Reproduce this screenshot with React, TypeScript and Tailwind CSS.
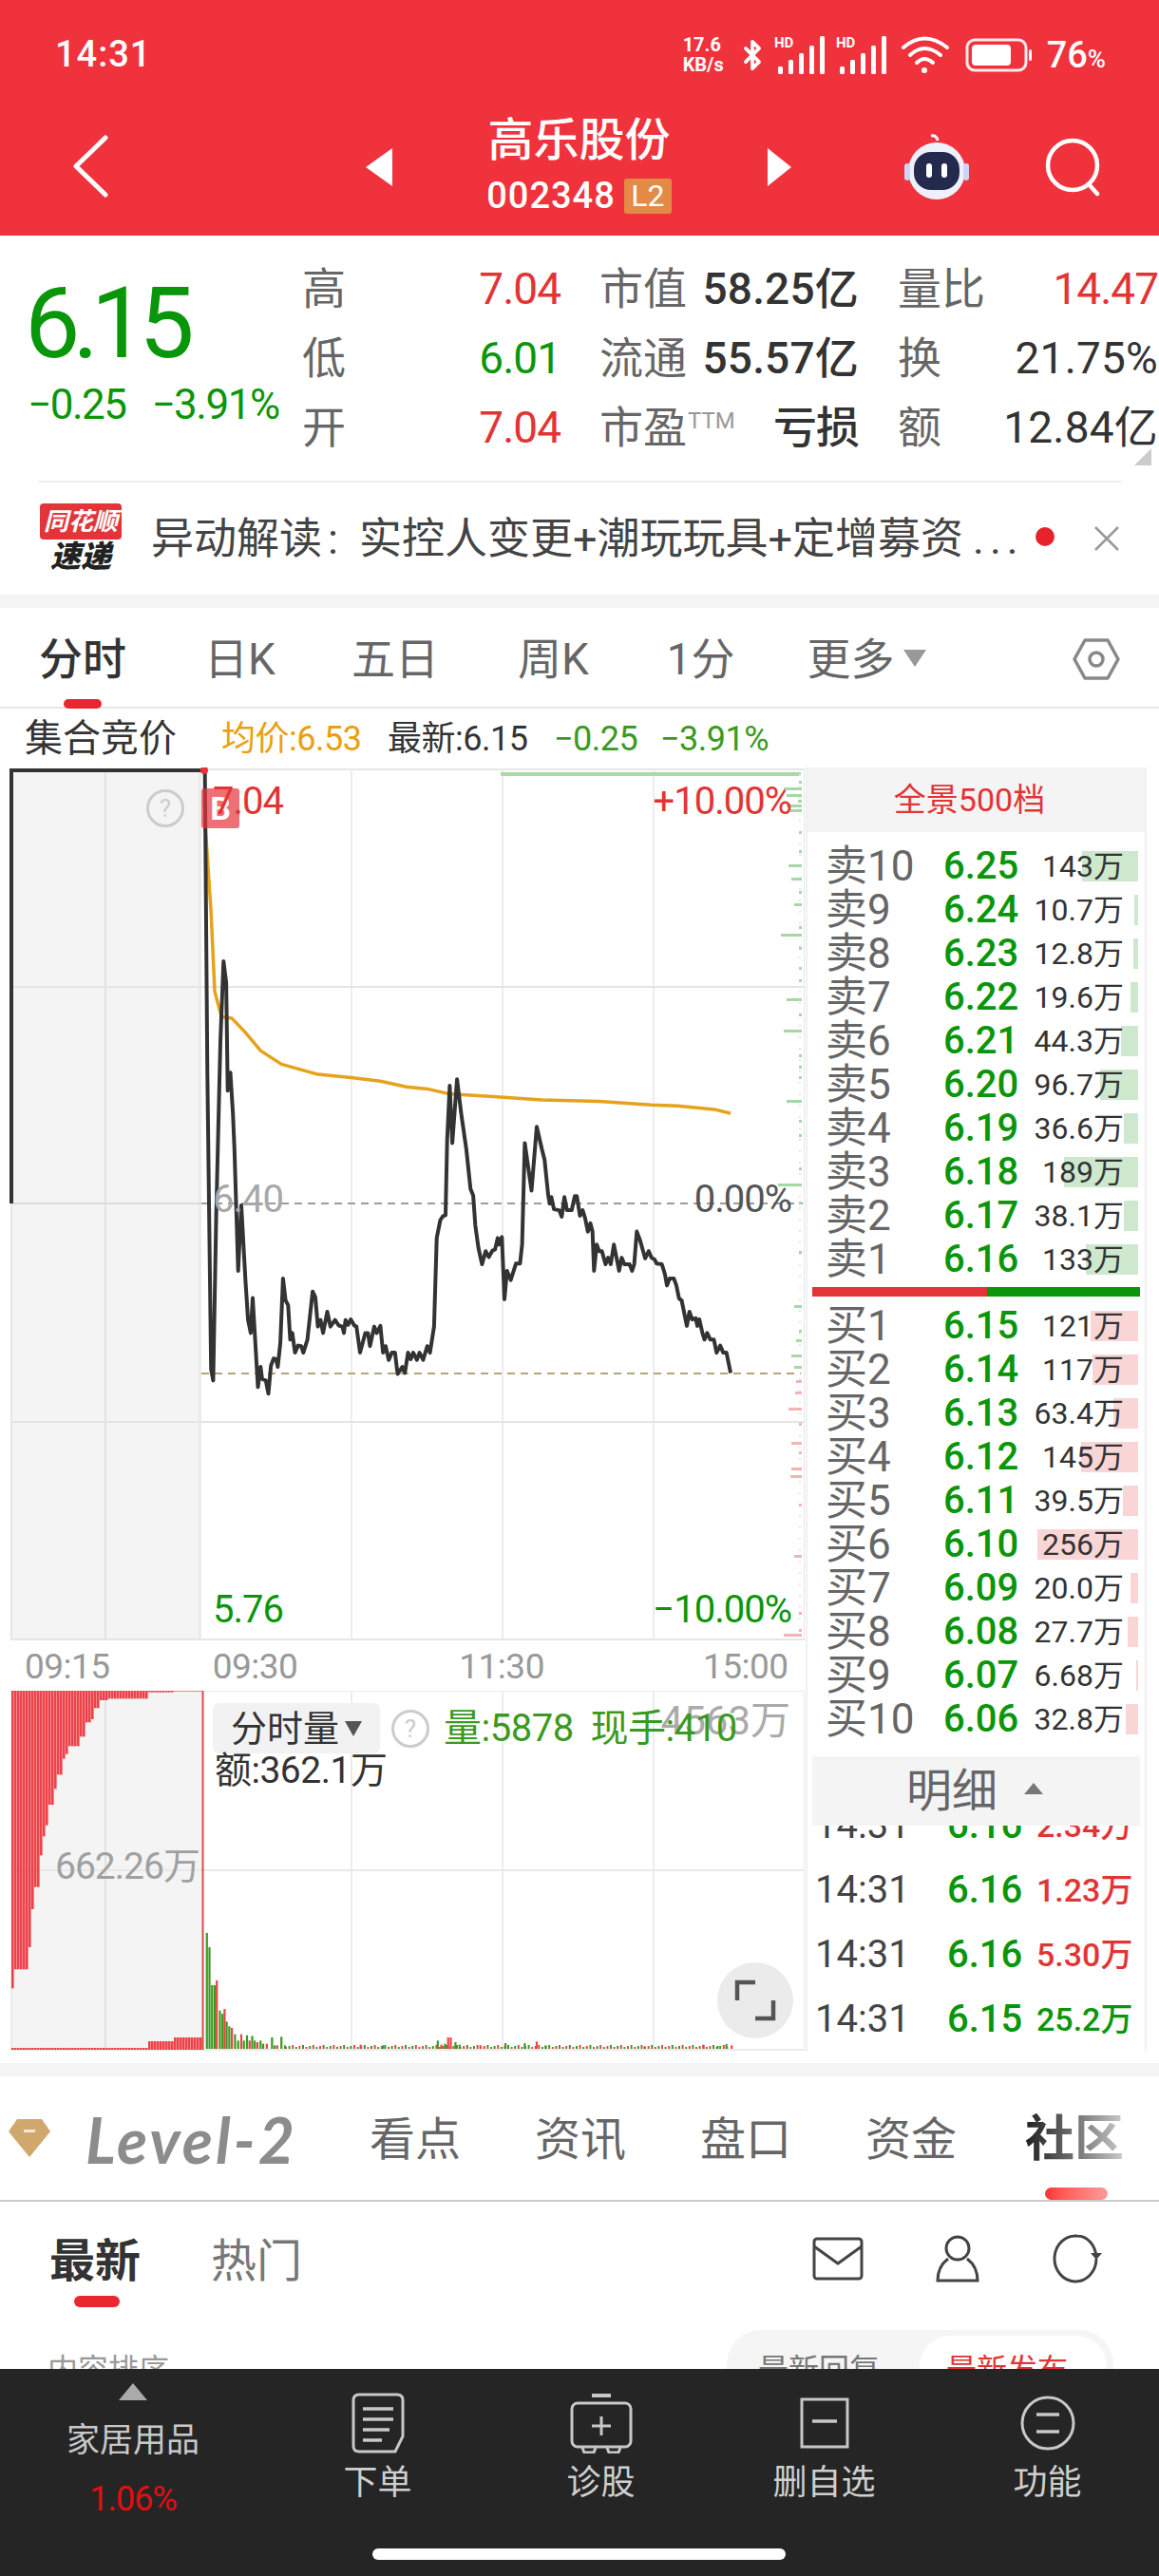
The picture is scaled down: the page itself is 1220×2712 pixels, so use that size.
import { Bluetooth } from "lucide-react";

// price line, read off the chart in crop coordinates
const priceRaw = [
  [392,-1360],[398,-200],[405,700],[409,735],[415,230],[423,-300],[429,-545],[434,-480],[437,-150],[442,-205],[447,-80],[450,30],[457,400],[463,200],[471,430],[476,550],[481,590],[485,483],[495,755],[500,693],[503,730],[510,735],[515,775],[520,690],[525,668],[530,670],[533,693],[538,620],[543,423],[548,490],[553,505],[557,610],[561,590],[566,650],[572,628],[578,630],[582,650],[590,610],[600,463],[605,480],[610,570],[615,550],[620,590],[628,525],[634,570],[643,550],[650,567],[657,570],[660,590],[663,550],[668,565],[673,548],[680,567],[684,570],[691,650],[701,590],[706,590],[710,630],[718,570],[723,590],[730,568],[735,650],[740,630],[746,672],[752,650],[758,650],[763,715],[772,693],[777,712],[783,650],[788,670],[793,650],[800,672],[805,650],[812,672],[820,630],[825,650],[833,570],[838,300],[845,245],[850,233],[855,230],[858,0],[863,-165],[868,10],[877,-185],[885,-80],[895,30],[903,150],[908,170],[912,260],[918,330],[925,380],[932,340],[938,358],[945,338],[950,335],[955,300],[958,320],[963,297],[968,487],[973,400],[980,428],[990,378],[998,378],[1002,320],[1007,10],[1020,155],[1030,-40],[1040,30],[1045,60],[1052,170],[1055,195],[1058,175],[1063,212],[1073,215],[1078,235],[1083,175],[1088,215],[1097,215],[1103,172],[1107,172],[1113,232],[1118,215],[1123,240],[1128,280],[1133,255],[1137,280],[1140,400],[1145,320],[1150,340],[1155,340],[1162,380],[1167,360],[1172,380],[1178,320],[1188,400],[1193,360],[1198,380],[1208,380],[1213,400],[1217,380],[1222,280],[1228,305],[1238,362],[1245,340],[1250,360],[1256,365],[1260,378],[1270,380],[1276,410],[1280,445],[1285,423],[1293,423],[1298,445],[1303,485],[1308,490],[1318,568],[1323,525],[1328,548],[1335,545],[1338,568],[1342,548],[1348,590],[1352,610],[1357,590],[1363,610],[1370,610],[1375,650],[1382,628],[1388,650],[1394,650],[1402,712],
];
const pricePts = priceRaw.map(([x, y]) => `${(x / 1.823).toFixed(1)},${(1200 + y / 2.9).toFixed(1)}`).join(" ");

const avgRaw = [
  [393,620],[405,900],[412,1130],[425,1205],[445,1210],[470,1250],[500,1305],[540,1345],[610,1375],[674,1385],[730,1395],[780,1412],[820,1418],[860,1432],[940,1440],[1040,1450],[1150,1455],[1250,1465],[1300,1468],[1370,1478],[1402,1490],
];
const avgPts = avgRaw.map(([x, y]) => `${(x / 1.823).toFixed(1)},${(640 + y / 2.8).toFixed(1)}`).join(" ");

// right edge ticks of the main chart: [y, width, up]
const ticks: [number, number, boolean][] = [
  [822,3,true],[829,19,true],[836,16,true],[842,4,true],[847,16,true],[852,12,true],[875,3,true],[895,3,true],[910,14,true],[924,11,true],[938,3,true],[951,8,true],[975,3,true],[983,22,true],[997,3,true],[1018,3,true],[1031,3,true],[1051,16,true],[1067,3,true],[1084,19,true],[1110,3,true],[1122,3,true],[1133,3,true],[1158,16,true],[1179,3,true],[1194,3,true],
  [1229,3,true],[1246,25,true],[1265,3,true],[1317,3,true],[1374,8,true],[1400,3,true],[1410,6,true],[1426,11,true],[1438,8,true],
  [1453,6,false],[1465,7,false],[1482,14,false],[1498,3,false],[1518,11,false],[1528,3,false],[1545,11,false],[1553,12,false],[1583,3,false],[1637,8,false],[1697,3,false],[1715,3,false],[1720,19,false],
];

// auction bars in the volume chart, [crop x, crop y of the lower end]
const curve = [[22,1060],[50,1000],[55,930],[60,865],[65,810],[72,740],[78,640],[85,580],[92,545],[100,480],[108,430],[115,385],[125,335],[130,320],[150,295],[160,265],[170,220],[180,210],[190,175],[203,150],[280,145],[283,130],[330,125],[385,122]];
const auctionBars = Array.from({ length: 67 }, (_, i) => {
  const x = 12 + i * 3;
  const cx = x * 1.823;
  const c = curve.find((p) => p[0] >= cx) ?? curve[curve.length - 1];
  const lower = 1740 + c[1] / 3;
  const up = cx < 280 ? 2156 : cx < 330 ? 2149 : 2145;
  return { x, lower, up };
});

// volume bars, [crop x, crop y of the top]
const volRaw = [[395,885],[400,930],[405,1050],[410,1050],[414,1035],[420,1130],[425,1140],[429,1125],[433,1165],[438,1180],[443,1185],[449,1205],[455,1225],[461,1205],[466,1225],[472,1208],[477,1225],[482,1210],[487,1225],[492,1230],[498,1225],[503,1235],[510,1235],[520,1215],[525,1240],[530,1240],[538,1213],[545,1240],[690,1238],[733,1240],[838,1225],[845,1238],[852,1235],[858,1215],[863,1215],[872,1230],[880,1238],[920,1240],[968,1233],[1005,1233],[1028,1228],[1045,1240],[1235,1243],[1348,1238],[1375,1242],[1392,1236],[1402,1240]];
const volBars = volRaw.map(([x, y], i) => ({ x: x / 1.823, y: 1740 + y / 3, red: x > 410 ? i % 3 === 1 || x === 858 || x === 1028 : false }));
const lowBars = Array.from({ length: 130 }, (_, i) => ({ x: 300 + i * 3.6, h: 2 + (i * 7) % 3, red: i % 2 === 0 }));

const sells = [
  ["卖10", "6.25", "143万", 59],
  ["卖9", "6.24", "10.7万", 4],
  ["卖8", "6.23", "12.8万", 5],
  ["卖7", "6.22", "19.6万", 8],
  ["卖6", "6.21", "44.3万", 18],
  ["卖5", "6.20", "96.7万", 40],
  ["卖4", "6.19", "36.6万", 15],
  ["卖3", "6.18", "189万", 78],
  ["卖2", "6.17", "38.1万", 15],
  ["卖1", "6.16", "133万", 55],
] as const;

const buys = [
  ["买1", "6.15", "121万", 50],
  ["买2", "6.14", "117万", 48],
  ["买3", "6.13", "63.4万", 26],
  ["买4", "6.12", "145万", 60],
  ["买5", "6.11", "39.5万", 16],
  ["买6", "6.10", "256万", 106],
  ["买7", "6.09", "20.0万", 8],
  ["买8", "6.08", "27.7万", 11],
  ["买9", "6.07", "6.68万", 2],
  ["买10", "6.06", "32.8万", 13],
] as const;

const trades = [
  ["6.16", "2.34万", "text-[#e23434]"],
  ["6.16", "1.23万", "text-[#e23434]"],
  ["6.16", "5.30万", "text-[#e23434]"],
  ["6.15", "25.2万", "text-[#0a960a]"],
];

const Signal = () => (
  <svg width="56" height="44" viewBox="0 0 56 44" fill="white">
    <text x="0" y="14" fontSize="15" fontWeight="700" fontFamily="Roboto">HD</text>
    <rect x="4" y="34" width="5" height="8" rx="1.5" />
    <rect x="15" y="27" width="5" height="15" rx="1.5" />
    <rect x="26" y="20" width="5" height="22" rx="1.5" />
    <rect x="37" y="12" width="5" height="30" rx="1.5" />
    <rect x="48" y="2" width="5" height="40" rx="1.5" />
  </svg>
);

function OrderRow({ row, barColor }: { row: readonly [string, string, string, number]; barColor: string }) {
  return (
    <div className="relative flex h-[46px] items-center">
      <div className="absolute right-[7px] h-[32px]" style={{ width: row[3], background: barColor }} />
      <span className="relative ml-[19px] w-[124px] text-[44px] leading-none text-[#666]">{row[0]}</span>
      <span className="relative w-[85px] text-[40px] leading-none font-medium text-[#0a960a]">{row[1]}</span>
      <span className="relative flex-1 pr-[22px] text-right text-[32px] leading-none whitespace-nowrap text-[#333]">{row[2]}</span>
    </div>
  );
}

function QuoteCell({ label, value, color, sup, wide }: { label: string; value: string; color: string; sup?: string; wide?: boolean }) {
  return (
    <div className="flex items-center justify-between">
      <span className="flex items-start text-[46px] leading-none whitespace-nowrap text-[#666]">
        {label}
        {sup && <span className="mt-[4px] ml-[1px] text-[24px] leading-none text-[#999]">{sup}</span>}
      </span>
      <span className={`text-[46px] leading-none whitespace-nowrap ${color} ${wide ? "tracking-[0.2px]" : "tracking-[-1px]"}`}>{value}</span>
    </div>
  );
}

function NavItem({ label, children }: { label: string; children: React.ReactNode }) {
  return (
    <div className="flex w-[235px] flex-col items-center">
      <div className="flex h-[68px] items-center">{children}</div>
      <span className="mt-[7px] text-[36px] leading-[44px] text-[#cfcfcf]">{label}</span>
    </div>
  );
}

export default function App() {
  return (
    <div
      className="flex h-[2712px] w-[1220px] flex-col overflow-hidden bg-white"
      style={{ fontFamily: 'Roboto, "Noto Sans CJK SC", sans-serif' }}
    >
      {/* red header */}
      <header className="h-[248px] shrink-0 bg-[#f0323c] text-white">
        <div className="flex h-[118px] items-center pt-[3px] pb-[6px]">
          <span className="ml-[58px] text-[38px] font-medium tracking-[1px]">14:31</span>
          <div className="ml-auto flex items-center pr-[56px]">
            <div className="flex w-[52px] flex-col text-[20px] leading-[21px] font-bold">
              <span>17.6</span>
              <span>KB/s</span>
            </div>
            <Bluetooth className="ml-[4px] h-[50px] w-[34px]" strokeWidth={2.6} />
            <div className="ml-[6px]"><Signal /></div>
            <div className="ml-[9px]"><Signal /></div>
            <svg className="ml-[12px]" width="52" height="46" viewBox="0 0 52 46" fill="none" stroke="white" strokeWidth="4" strokeLinecap="round">
              <path d="M3 15 Q25 -4 49 15" />
              <path d="M10 23 Q25 9 42 23" />
              <path d="M17 31 Q25 23 34 31" />
              <circle cx="25" cy="39" r="3" fill="white" stroke="none" />
            </svg>
            <svg className="ml-[16px]" width="72" height="40" viewBox="0 0 72 40" fill="none">
              <rect x="2" y="4" width="62" height="32" rx="8" stroke="white" strokeOpacity="0.9" strokeWidth="3" />
              <rect x="7" y="9" width="41" height="22" rx="4" fill="white" />
              <rect x="67" y="14" width="3" height="12" rx="1.5" fill="white" />
            </svg>
            <span className="ml-[14px] text-[38px] leading-none font-medium">
              76<span className="text-[26px]">%</span>
            </span>
          </div>
        </div>
        <div className="flex h-[130px]">
          <div className="flex w-[385px] items-center pl-[75px]">
            <svg className="mb-[16px]" width="42" height="66" viewBox="0 0 42 66" fill="none" stroke="white" strokeWidth="5" strokeLinecap="round" strokeLinejoin="round">
              <path d="M36 3 L5 33 L36 63" />
            </svg>
          </div>
          <div className="flex w-[30px] items-center pb-[14px]">
            <svg width="28" height="40" viewBox="0 0 28 40" fill="white"><path d="M28 0 V40 L0 20 Z" /></svg>
          </div>
          <div className="flex w-[393px] flex-col items-center pt-[1px] pr-[4px]">
            <span className="text-[48px] leading-[58px] font-medium">高乐股份</span>
            <div className="mt-[9px] flex items-center gap-[9px]">
              <span className="text-[38px] leading-[40px] font-medium tracking-[1px]">002348</span>
              <span className="flex h-[37px] w-[50px] items-center justify-center rounded-[3px] bg-[#e48a47] text-[32px] leading-none">L2</span>
            </div>
          </div>
          <div className="flex w-[142px] items-center pb-[14px]">
            <svg width="25" height="40" viewBox="0 0 25 40" fill="white"><path d="M0 0 V40 L25 20 Z" /></svg>
          </div>
          <div className="flex w-[150px] items-center pb-[14px]">
            <svg width="72" height="72" viewBox="0 0 72 72">
              <path d="M37 8 Q36 2 30 3" fill="none" stroke="white" strokeWidth="3" />
              <circle cx="36" cy="40" r="30" fill="#eef0fb" />
              <rect x="2" y="32" width="6" height="18" rx="3" fill="#cfd4f5" />
              <rect x="64" y="32" width="6" height="18" rx="3" fill="#cfd4f5" />
              <rect x="12" y="20" width="48" height="40" rx="18" fill="#242a4e" />
              <rect x="25" y="32" width="6" height="15" rx="3" fill="white" />
              <rect x="41" y="32" width="6" height="15" rx="3" fill="white" />
            </svg>
          </div>
          <div className="flex items-center pb-[14px]">
            <svg width="60" height="62" viewBox="0 0 60 62" fill="none" stroke="white" strokeWidth="4.5" strokeLinecap="round">
              <circle cx="29" cy="29" r="26" />
              <path d="M46 49 L55 59" />
            </svg>
          </div>
        </div>
      </header>

      {/* quote */}
      <section className="relative flex h-[258px] shrink-0 pl-[29px]">
        <div className="w-[289px] pt-[38px] whitespace-nowrap">
          <div className="ml-[-3px] text-[104px] leading-[110px] tracking-[-8px] text-[#0a960a]">6.15</div>
          <div className="mt-[5px] flex gap-[27px] text-[44px] leading-[50px] tracking-[-1.5px] text-[#0a960a]">
            <span>−0.25</span>
            <span>−3.91%</span>
          </div>
        </div>
        <div className="grid grid-cols-[272px_273px_274px] grid-rows-[72px_73px_73px] items-center gap-x-[41px] pt-[20px]">
          <QuoteCell label="高" value="7.04" color="text-[#e23434]" />
          <QuoteCell label="市值" value="58.25亿" color="text-[#333] font-medium" wide />
          <QuoteCell label="量比" value="14.47" color="text-[#e23434]" />
          <QuoteCell label="低" value="6.01" color="text-[#0a960a]" />
          <QuoteCell label="流通" value="55.57亿" color="text-[#333] font-medium" wide />
          <QuoteCell label="换" value="21.75%" color="text-[#333]" wide />
          <QuoteCell label="开" value="7.04" color="text-[#e23434]" />
          <QuoteCell label="市盈" sup="TTM" value="亏损" color="text-[#333] font-medium" />
          <QuoteCell label="额" value="12.84亿" color="text-[#333]" wide />
        </div>
        <svg className="absolute top-[224px] right-[8px]" width="18" height="18" viewBox="0 0 18 18" fill="#ccc">
          <path d="M18 0 V18 H0 Z" />
        </svg>
      </section>

      {/* ticker */}
      <div className="mx-[40px] h-[2px] shrink-0 bg-[#eeeeee]" />
      <div className="flex h-[118px] shrink-0 items-center pl-[41px]">
        <div className="flex w-[88px] flex-col items-center">
          <span className="w-[86px] rounded-[4px] bg-[#e3343a] text-center text-[26px] leading-[38px] font-bold text-white italic">同花顺</span>
          <span className="text-[32px] leading-[36px] font-black text-[#222] italic">速递</span>
        </div>
        <span className="ml-[30px] flex w-[931px] text-[45px] leading-none whitespace-nowrap text-[#444]">
          异动解读<span className="w-[39px] pl-[6px]">:</span>实控人变更+潮玩玩具+定增募资<span className="ml-[10px] tracking-[6px]">...</span>
        </span>
        <span className="mb-[4px] h-[20px] w-[20px] rounded-full bg-[#e8222c]" />
        <svg className="ml-[41px]" width="28" height="28" viewBox="0 0 28 28" stroke="#999" strokeWidth="2.5"><path d="M2 2 L26 26 M26 2 L2 26" /></svg>
      </div>
      <div className="h-[14px] shrink-0 bg-[#f5f5f5]" />

      {/* period tabs */}
      <nav className="relative flex h-[106px] shrink-0 items-start border-b-2 border-[#e8e8e8] pt-[30px] text-[46px] leading-[48px] text-[#666]">
        <span className="ml-[41px] font-medium text-[#333]">分时</span>
        <span className="ml-[82px]">日K</span>
        <span className="ml-[80px]">五日</span>
        <span className="ml-[83px]">周K</span>
        <span className="ml-[82px]">1分</span>
        <span className="ml-[76px]">更多</span>
        <svg className="mt-[14px] ml-[9px]" width="24" height="18" viewBox="0 0 24 18" fill="#999"><path d="M0 0 H24 L12 18 Z" /></svg>
        <svg className="mt-[1px] ml-[154px]" width="50" height="46" viewBox="0 0 50 46" fill="none" stroke="#888" strokeWidth="3.5" strokeLinejoin="round">
          <path d="M2 23 L13 3 H37 L48 23 L37 43 H13 Z" />
          <circle cx="25" cy="23" r="7" />
        </svg>
        <span className="absolute top-[96px] left-[67px] h-[10px] w-[40px] rounded-full bg-[#e8282e]" />
      </nav>

      {/* info strip */}
      <div className="flex h-[62px] shrink-0 items-center pt-[2px] pl-[26px] text-[36px] leading-none tracking-[-0.5px] whitespace-nowrap">
        <span className="w-[207px] text-[40px] tracking-normal text-[#333]">集合竞价</span>
        <span className="w-[175px] text-[#e8a010]">均价:6.53</span>
        <span className="w-[175px] text-[#333]">最新:6.15</span>
        <span className="w-[112px] text-[#3a9a20]">−0.25</span>
        <span className="text-[#3a9a20]">−3.91%</span>
      </div>

      {/* chart + order book */}
      <div className="flex h-[1352px] shrink-0">
        <div className="w-[847px] shrink-0">
          <div className="relative h-[920px]">
            <svg className="absolute inset-0" width="847" height="920" viewBox="0 808 847 920">
              <rect x="12" y="810" width="200" height="916" fill="#f4f4f4" />
              <rect x="209" y="810" width="3" height="916" fill="#ebebeb" />
              <rect x="12" y="810" width="835" height="916" fill="none" stroke="#e6e6e6" strokeWidth="2" />
              <line x1="111" x2="111" y1="810" y2="1726" stroke="#dcdcdc" strokeWidth="1.5" />
              {[370, 529, 688].map((x) => <line key={x} x1={x} x2={x} y1="810" y2="1726" stroke="#ececec" strokeWidth="2" />)}
              {[1039, 1497].map((y) => <line key={y} x1="12" x2="847" y1={y} y2={y} stroke="#e4e4e4" strokeWidth="2" />)}
              <line x1="12" x2="212" y1="1267" y2="1267" stroke="#dcdcdc" strokeWidth="2" />
              <line x1="212" x2="845" y1="1267" y2="1267" stroke="#9c9c9c" strokeWidth="2" strokeDasharray="8 6" />
              <line x1="212" x2="843" y1="1446" y2="1446" stroke="#b5a47f" strokeWidth="2" strokeDasharray="8 6" />
              <line x1="527" x2="843" y1="815" y2="815" stroke="#a9d8a9" strokeWidth="4" />
              <line x1="842" x2="842" y1="815" y2="1726" stroke="#e6e6e6" strokeWidth="2" strokeDasharray="2 10" />
              {ticks.map(([y, w, up]) => (
                <rect key={y} x={844 - w} y={y} width={w} height="3" fill={up ? "#a5d8a5" : "#f0b4b4"} />
              ))}
              <path d="M12 1267 V811 H214" fill="none" stroke="#333" strokeWidth="4" />
              <polyline points={avgPts} fill="none" stroke="#e5a21a" strokeWidth="3.5" strokeLinejoin="round" />
              <polyline points={pricePts} fill="none" stroke="#333" strokeWidth="4" strokeLinejoin="round" />
              <circle cx="215" cy="811" r="4" fill="#e8323c" />
            </svg>
            <span className="absolute top-[22px] left-[212px] flex h-[42px] w-[40px] items-center justify-center rounded-[3px] bg-[#e8323c]/70 text-[34px] leading-none font-bold text-white">B</span>
            <span className="absolute top-[13px] left-[224px] text-[40px] leading-[46px] tracking-[-1px] text-[#e23434]">7.04</span>
            <span className="absolute top-[13px] right-[14px] text-[40px] leading-[46px] tracking-[-1px] text-[#e23434]">+10.00%</span>
            <span className="absolute top-[23px] left-[154px] flex h-[40px] w-[40px] items-center justify-center rounded-full border-[3px] border-[#ccc] text-[26px] leading-none text-[#ccc]">?</span>
            <span className="absolute top-[432px] left-[224px] text-[40px] leading-[46px] tracking-[-1px] text-[#a8a8a8]">6.40</span>
            <span className="absolute top-[432px] right-[14px] text-[40px] leading-[46px] tracking-[-1px] text-[#555]">0.00%</span>
            <span className="absolute top-[864px] left-[224px] text-[40px] leading-[46px] tracking-[-1px] text-[#0a960a]">5.76</span>
            <span className="absolute top-[864px] right-[14px] text-[40px] leading-[46px] tracking-[-1px] text-[#0a960a]">−10.00%</span>
          </div>

          <div className="flex h-[52px] items-center text-[37px] leading-none tracking-[-0.5px] text-[#999]">
            <span className="ml-[26px]">09:15</span>
            <span className="ml-[108px]">09:30</span>
            <span className="ml-[170px]">11:30</span>
            <span className="ml-[167px]">15:00</span>
          </div>

          <div className="relative h-[380px]">
            <svg className="absolute inset-0" width="847" height="380" viewBox="0 1780 847 380">
              <rect x="12" y="1780" width="200" height="378" fill="#f4f4f4" />
              <rect x="12" y="1780" width="835" height="378" fill="none" stroke="#ebebeb" strokeWidth="2" />
              <line x1="111" x2="111" y1="1780" y2="2158" stroke="#dcdcdc" strokeWidth="1.5" />
              {[370, 529, 688].map((x) => <line key={x} x1={x} x2={x} y1="1780" y2="2158" stroke="#ececec" strokeWidth="2" />)}
              <line x1="12" x2="847" y1="1969" y2="1969" stroke="#e8e8e8" strokeWidth="2" />
              {auctionBars.map((b) => (
                <g key={b.x}>
                  <rect x={b.x} y="1780" width="2.6" height={b.lower - 1780} fill="#ee4249" />
                  <rect x={b.x} y={b.up} width="2.6" height={2158 - b.up} fill="#ee4249" />
                </g>
              ))}
              <line x1="213.5" x2="213.5" y1="1780" y2="2158" stroke="#d94a4a" strokeWidth="2" />
              {lowBars.map((b) => (
                <rect key={b.x} x={b.x} y={2157 - b.h} width="2" height={b.h} fill={b.red ? "#ee4249" : "#3a9a20"} />
              ))}
              {volBars.map((b) => (
                <rect key={b.x} x={b.x} y={b.y} width="2.2" height={2157 - b.y} fill={b.red ? "#ee4249" : "#3a9a20"} />
              ))}
            </svg>
            <span className="absolute top-[10px] right-[15px] text-[42px] leading-[44px] text-[#aaa]">4563万</span>
            <div className="absolute top-[13px] left-[224px] flex items-center gap-[12px] text-[38px] leading-none whitespace-nowrap">
              <span className="flex h-[53px] w-[176px] items-center justify-center gap-[6px] rounded-[6px] bg-[#f2f2f2] text-[#333]">
                分时量
                <svg width="18" height="16" viewBox="0 0 18 16" fill="#555"><path d="M0 0 H18 L9 16 Z" /></svg>
              </span>
              <span className="flex h-[40px] w-[40px] items-center justify-center rounded-full border-[3px] border-[#ccc] text-[26px] text-[#ccc]">?</span>
              <span className="ml-[3px] text-[40px] tracking-[-0.5px] text-[#3a9a20]">量:5878</span>
              <span className="ml-[6px] text-[40px] tracking-[-0.5px] text-[#3a9a20]">现手:410</span>
            </div>
            <span className="absolute top-[62px] left-[226px] text-[39px] leading-[44px] tracking-[-0.5px] text-[#333]">额:362.1万</span>
            <span className="absolute top-[163px] left-[58px] text-[39px] leading-[44px] tracking-[-1px] text-[#a0a0a0]">662.26万</span>
            <div className="absolute top-[286px] left-[755px] flex h-[80px] w-[80px] items-center justify-center rounded-full bg-[#ebebeb]">
              <svg width="44" height="44" viewBox="0 0 44 44" fill="none" stroke="#555" strokeWidth="4.5">
                <path d="M3 22 V3 H22 M41 22 V41 H22" />
              </svg>
            </div>
          </div>
        </div>

        <aside className="ml-[1px] w-[359px] shrink-0 border-r-2 border-l-2 border-[#f0f0f0]">
          <div className="flex h-[68px] items-center justify-center bg-[#f4f4f4] pr-[14px] text-[34px] leading-none text-[#e23434]">全景500档</div>
          <div className="pt-[13px]">
            {sells.map((r) => <OrderRow key={r[0]} row={r} barColor="#cde8cd" />)}
          </div>
          <div className="mx-[5px] mt-[6px] flex h-[10px]">
            <div className="w-[184px] bg-[#e23434]" />
            <div className="flex-1 bg-[#0a960a]" />
          </div>
          <div className="pt-[8px]">
            {buys.map((r) => <OrderRow key={r[0]} row={r} barColor="#f9d5d5" />)}
          </div>
          <div className="relative z-10 mx-[5px] mt-[16px] flex h-[73px] items-center bg-[#f4f4f4] pl-[99px] text-[48px] leading-none text-[#666]">
            明细
            <svg className="mb-[6px] ml-[28px]" width="20" height="12" viewBox="0 0 20 12" fill="#777"><path d="M10 0 L20 12 H0 Z" /></svg>
          </div>
          <div className="h-[236px] overflow-hidden">
            <div className="mt-[-34px]">
              {trades.map((t, i) => (
                <div key={i} className="flex h-[68px] items-center pl-[8px] whitespace-nowrap">
                  <span className="w-[139px] text-[40px] leading-none text-[#444]">14:31</span>
                  <span className="w-[94px] text-[40px] leading-none font-medium text-[#0a960a]">{t[0]}</span>
                  <span className={`text-[34px] leading-none font-medium ${t[2]}`}>{t[1]}</span>
                </div>
              ))}
            </div>
          </div>
        </aside>
      </div>

      <div className="mt-[12px] h-[14px] shrink-0 bg-[#f5f5f5]" />

      {/* content tabs */}
      <nav className="relative flex h-[132px] shrink-0 items-start border-b-2 border-[#cccccc] pt-[39px] text-[48px] leading-[56px] text-[#666]">
        <svg className="mt-[5px] ml-[8px]" width="46" height="42" viewBox="0 0 46 42">
          <path d="M10 1 H36 L45 14 L23 41 L1 14 Z" fill="#d0a76c" />
          <rect x="17" y="12" width="12" height="3" fill="#f6e9d4" />
        </svg>
        <span className="ml-[36px] w-[299px] text-[66px] leading-[56px] font-bold tracking-[3px] text-[#8c8c8c] italic" style={{ fontFamily: "Lato, sans-serif" }}>Level-2</span>
        <span>看点</span>
        <span className="ml-[78px]">资讯</span>
        <span className="ml-[78px]">盘口</span>
        <span className="ml-[78px]">资金</span>
        <span className="ml-[72px] bg-gradient-to-r from-[#222] to-[#ccc] bg-clip-text text-[52px] font-bold text-transparent">社区</span>
        <span className="absolute right-[54px] bottom-0 h-[13px] w-[66px] rounded-full bg-gradient-to-r from-[#f33] to-[#fa9a9a]" />
      </nav>

      <div className="relative flex h-[135px] shrink-0 items-start pt-[37px] text-[48px] leading-[52px]">
        <span className="ml-[52px] font-bold text-[#333]">最新</span>
        <span className="ml-[74px] text-[#777]">热门</span>
        <span className="absolute top-[99px] left-[78px] h-[12px] w-[48px] rounded-full bg-[#e8282e]" />
        <div className="absolute top-[34px] left-[855px] flex items-center">
          <svg width="54" height="46" viewBox="0 0 54 46" fill="none" stroke="#444" strokeWidth="3" strokeLinejoin="round">
            <rect x="2" y="2" width="50" height="42" rx="3" />
            <path d="M2 10 L27 28 L52 10" />
          </svg>
          <svg className="ml-[75px]" width="48" height="52" viewBox="0 0 48 52" fill="none" stroke="#444" strokeWidth="3">
            <circle cx="24" cy="15" r="12" />
            <path d="M14 26 C6 32 3 40 3 49 H45 C45 40 42 32 34 26" />
          </svg>
          <svg className="ml-[75px]" width="56" height="52" viewBox="0 0 56 52" fill="none" stroke="#444" strokeWidth="3">
            <path d="M47 26 A22 24 0 1 1 27 2 C38 2 46 12 47 24" />
            <path d="M41 20 H53 L47 27 Z" fill="#444" stroke="none" />
          </svg>
        </div>
      </div>

      <div className="relative h-[41px] shrink-0 overflow-hidden">
        <span className="absolute top-[22px] left-[50px] text-[32px] leading-[40px] text-[#999]">内容排序</span>
        <div className="absolute top-[0px] left-[765px] h-[80px] w-[407px] rounded-[36px] bg-[#f5f5f5]" />
        <div className="absolute top-[6px] left-[968px] h-[80px] w-[197px] rounded-[32px] bg-white" />
        <span className="absolute top-[22px] left-[798px] text-[32px] leading-[40px] text-[#777]">最新回复</span>
        <span className="absolute top-[22px] left-[996px] text-[32px] leading-[40px] text-[#e23434]">最新发布</span>
      </div>

      {/* bottom bar */}
      <footer className="relative flex-1 bg-[#252525]">
        <div className="flex pt-[23px]">
          <div className="flex w-[280px] flex-col items-center">
            <svg className="mt-[-8px]" width="30" height="18" viewBox="0 0 30 18" fill="#aaa"><path d="M15 0 L30 18 H0 Z" /></svg>
            <span className="mt-[21px] text-[35px] leading-[44px] text-[#c8c8c8]">家居用品</span>
            <span className="mt-[17px] text-[36px] leading-[44px] tracking-[-1px] text-[#e01010]">1.06%</span>
          </div>
          <NavItem label="下单">
            <svg width="56" height="64" viewBox="0 0 56 64" fill="none" stroke="#c8c8c8" strokeWidth="3">
              <path d="M8 2 H48 Q54 2 54 8 V46 L46 62 H8 Q2 62 2 56 V8 Q2 2 8 2 Z" />
              <path d="M12 17 H44 M12 28 H44 M12 39 H40 M12 50 H32" strokeWidth="3.5" />
            </svg>
          </NavItem>
          <NavItem label="诊股">
            <svg width="66" height="64" viewBox="0 0 66 64" fill="none" stroke="#c8c8c8" strokeWidth="3">
              <path d="M23 3 H43" strokeWidth="4" />
              <rect x="2" y="11" width="62" height="46" rx="6" />
              <path d="M33 25 V45 M23 35 H43" />
              <path d="M13 58 L15 63 H25 L27 58 M39 58 L41 63 H51 L53 58" />
            </svg>
          </NavItem>
          <NavItem label="删自选">
            <svg width="52" height="54" viewBox="0 0 52 54" fill="none" stroke="#c8c8c8" strokeWidth="3">
              <rect x="2" y="2" width="48" height="50" />
              <path d="M13 25 H39" strokeWidth="3.5" />
            </svg>
          </NavItem>
          <NavItem label="功能">
            <svg width="58" height="60" viewBox="0 0 58 60" fill="none" stroke="#c8c8c8" strokeWidth="3">
              <circle cx="29" cy="30" r="27" />
              <path d="M17 21 H41 M17 39 H41" strokeWidth="3.5" />
            </svg>
          </NavItem>
        </div>
        <div className="absolute top-[189px] left-[392px] h-[12px] w-[435px] rounded-full bg-white" />
      </footer>
    </div>
  );
}
